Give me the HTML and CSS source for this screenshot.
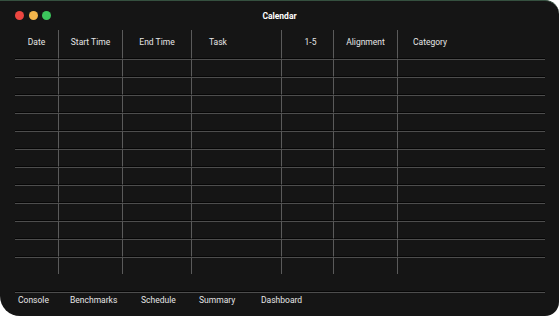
FILE: index.html
```html
<!DOCTYPE html>
<html>
  <head>
    <meta http-equiv="Content-Type" content="text/html; charset=utf-8" />
    <meta name="viewport" content="width=device-width, initial-scale=1" />
    <title>Calendar</title>
    <link rel="stylesheet" href="styles.css">
  </head>
  <body>
    <main class="window">
      <header class="titlebar">
        <div class="lights">
          <span class="light red"></span>
          <span class="light yellow"></span>
          <span class="light green"></span>
        </div>
        <h1>Calendar</h1>
        <div></div>
      </header>
      <table class="calendar">
        <colgroup>
          <col style="width: 44px" />
          <col style="width: 64px" />
          <col style="width: 69px" />
          <col style="width: 90px" />
          <col style="width: 52px" />
          <col style="width: 64px" />
          <col />
        </colgroup>
        <thead>
          <tr>
            <th>Date</th>
            <th>Start Time</th>
            <th>End Time</th>
            <th class="left task">Task</th>
            <th class="one-five">1-5</th>
            <th>Alignment</th>
            <th class="left category">Category</th>
          </tr>
        </thead>
        <tbody>
          <tr><td></td><td></td><td></td><td></td><td></td><td></td><td></td></tr>
          <tr><td></td><td></td><td></td><td></td><td></td><td></td><td></td></tr>
          <tr><td></td><td></td><td></td><td></td><td></td><td></td><td></td></tr>
          <tr><td></td><td></td><td></td><td></td><td></td><td></td><td></td></tr>
          <tr><td></td><td></td><td></td><td></td><td></td><td></td><td></td></tr>
          <tr><td></td><td></td><td></td><td></td><td></td><td></td><td></td></tr>
          <tr><td></td><td></td><td></td><td></td><td></td><td></td><td></td></tr>
          <tr><td></td><td></td><td></td><td></td><td></td><td></td><td></td></tr>
          <tr><td></td><td></td><td></td><td></td><td></td><td></td><td></td></tr>
          <tr><td></td><td></td><td></td><td></td><td></td><td></td><td></td></tr>
          <tr><td></td><td></td><td></td><td></td><td></td><td></td><td></td></tr>
          <tr class="last"><td></td><td></td><td></td><td></td><td></td><td></td><td></td></tr>
        </tbody>
      </table>
      <nav class="tabs">
        <span>Console</span>
        <span>Benchmarks</span>
        <span>Schedule</span>
        <span>Summary</span>
        <span>Dashboard</span>
      </nav>
    </main>
  </body>
</html>
```

FILE: styles.css
```css
:root {
  --background: #151515;
  --line: #4d4d4d;
  --groove: #060606;
  --rule: #5a5a5a;
}
html,
body {
  margin: 0;
  height: 100%;
  background-color: #ffffff;
  font-family: Roboto, "Liberation Sans", sans-serif;
  color: #e6e6e6;
}
*,
*:before,
*:after {
  box-sizing: border-box;
}
.window {
  height: 316px;
  width: 559px;
  background-color: var(--background);
  border-radius: 0 14px 14px 20px;
  border-top: 1px solid #35503f;
  display: flex;
  flex-direction: column;
}
.titlebar {
  height: 29px;
  display: grid;
  grid-template-columns: 1fr auto 1fr;
  align-items: center;
  padding: 0 15px;
}
.lights {
  display: flex;
  gap: 4.5px;
}
.light {
  width: 9px;
  height: 9px;
  border-radius: 50%;
}
.red {
  background-color: #ec4640;
}
.yellow {
  background-color: #f3b54b;
}
.green {
  background-color: #3cc65c;
}
h1 {
  margin: 0;
  font-size: 8.5px;
  font-weight: 700;
  color: #ffffff;
}
.calendar {
  margin-left: 15px;
  width: 530px;
  table-layout: fixed;
  border-collapse: separate;
  border-spacing: 0;
}
th,
td {
  padding: 0;
  border-right: 1px solid var(--rule);
}
th:last-child,
td:last-child {
  border-right: 0;
}
th {
  height: 29px;
  padding-bottom: 4px;
  font-size: 8.5px;
  font-weight: 400;
  text-align: center;
  border-bottom: 1px solid var(--groove);
  white-space: nowrap;
}
th.left {
  text-align: left;
}
th.task {
  padding-left: 17px;
}
th.category {
  padding-left: 15px;
}
th.one-five {
  padding-left: 6px;
}
td {
  height: 18px;
  border-top: 1px solid var(--line);
  border-bottom: 1px solid var(--groove);
}
tr.last td {
  height: 17px;
  border-bottom: 0;
}
.tabs {
  margin: 17px 14px 0 15px;
  border-top: 1px solid var(--groove);
  box-shadow: inset 0 1px 0 var(--line);
  padding: 3px 0 0 3px;
  display: grid;
  grid-template-columns: 52px 71px 58px 62px auto;
  font-size: 8.5px;
}
```
